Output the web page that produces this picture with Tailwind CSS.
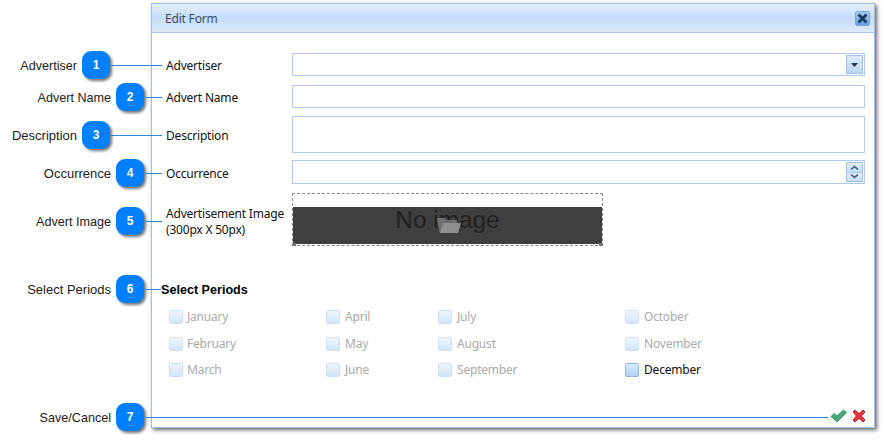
<!DOCTYPE html>
<html>
<head>
<meta charset="utf-8">
<script src="https://cdn.jsdelivr.net/npm/@tailwindcss/browser@4"></script>
</head>
<body class="bg-white">
<div class="relative w-[883px] h-[442px] overflow-hidden bg-white font-['Liberation_Sans',sans-serif]">

  <!-- dialog -->
  <div class="absolute left-[151px] top-[3px] w-[724px] h-[425px] flex flex-col bg-white border border-[#9dbfe8] shadow-[2px_2px_4px_rgba(0,0,0,0.6)] font-['Noto_Sans',sans-serif] text-[12px] tracking-[-0.2px] text-[#111]">
    <div class="h-[29px] shrink-0 flex items-center justify-between pl-[13px] pr-[4px] border-b border-[#a9c7ee] bg-gradient-to-b from-[#e4f0fe] via-[#c5dcf8] to-[#dcebfd]">
      <span class="text-[#3c4a66] pt-[2px]">Edit Form</span>
      <div class="w-[15px] h-[15px] flex items-center justify-center rounded-[2px] border border-[#7fa6d8] bg-gradient-to-b from-[#a6caf3] to-[#6ba2e2]">
        <svg width="11" height="11" viewBox="0 0 11 11"><path d="M1.5 1.5 9.5 9.5M9.5 1.5 1.5 9.5" stroke="#12405f" stroke-width="2.8"/></svg>
      </div>
    </div>

    <div class="flex flex-col pl-[14px] pr-[9px] pt-[20px]">
      <!-- Advertiser -->
      <div class="flex items-center h-[23px]">
        <label class="w-[126px] pt-[2px]">Advertiser</label>
        <div class="flex-1 h-full border border-[#b0cbee] flex justify-end items-center pr-[1px]">
          <div class="w-[17px] h-[19px] border border-[#a3c2ea] bg-gradient-to-b from-[#dcebfc] to-[#bcd6f5] flex items-center justify-center">
            <svg width="7" height="4" viewBox="0 0 7 4"><path d="M0 0H7L3.5 4Z" fill="#26364f"/></svg>
          </div>
        </div>
      </div>
      <!-- Advert name -->
      <div class="flex items-center h-[23px] mt-[9px]">
        <label class="w-[126px] pt-[2px]">Advert Name</label>
        <div class="flex-1 h-full border border-[#b0cbee]"></div>
      </div>
      <!-- Description -->
      <div class="flex items-center h-[37px] mt-[8px]">
        <label class="w-[126px] pt-[2px]">Description</label>
        <div class="flex-1 h-full border border-[#b0cbee]"></div>
      </div>
      <!-- Occurrence -->
      <div class="flex items-center h-[24px] mt-[7px]">
        <label class="w-[126px] pt-[3px]">Occurrence</label>
        <div class="flex-1 h-full border border-[#b0cbee] flex justify-end items-center pr-[1px]">
          <div class="w-[17px] h-[20px] border border-[#a3c2ea] flex flex-col">
            <div class="flex-1 bg-gradient-to-b from-[#e2eefd] to-[#c6dcf7] border-b border-[#a3c2ea] flex items-center justify-center">
              <svg width="9" height="5" viewBox="0 0 9 5"><path d="M1 4.5 4.5 1.5 8 4.5" fill="none" stroke="#4a6690" stroke-width="1.7"/></svg>
            </div>
            <div class="flex-1 bg-gradient-to-b from-[#e2eefd] to-[#c6dcf7] flex items-center justify-center">
              <svg width="9" height="5" viewBox="0 0 9 5"><path d="M1 .5 4.5 3.5 8 .5" fill="none" stroke="#4a6690" stroke-width="1.7"/></svg>
            </div>
          </div>
        </div>
      </div>
      <!-- Image -->
      <div class="flex mt-[9px]">
        <label class="w-[126px] pt-[13px] leading-[16px]">Advertisement Image<br>(300px X 50px)</label>
        <div class="relative w-[311px] h-[53px] border border-dashed border-[#888] flex flex-col justify-end tracking-normal">
          <div class="relative h-[37px] mb-[1px] bg-[#3f3f3f] flex items-center justify-center overflow-hidden pb-[11px]">
            <span class="text-[24.4px] leading-none text-[#1f1f1f] font-['Liberation_Sans',sans-serif]">No image</span>
            <svg class="absolute left-[143px] top-[10px]" width="26" height="17" viewBox="0 0 26 17">
              <path d="M1 1H8L10 3H21V6H25L22 16H4Z" fill="#8f8f8f"/>
              <path d="M1 1H8L10 3H21V6H7L4 16Z" fill="#6f6f6f"/>
            </svg>
          </div>
          <span class="absolute -left-[1px] -bottom-[1px] w-[4px] h-[3px] bg-[#777]"></span>
          <span class="absolute -right-[1px] -bottom-[1px] w-[4px] h-[3px] bg-[#777]"></span>
        </div>
      </div>
      <!-- Periods -->
      <div class="mt-[34px]">
        <h3 class="-ml-[5px] h-[20px] flex items-center font-bold text-[12.6px] tracking-normal text-black font-['Liberation_Sans',sans-serif]">Select Periods</h3>
        <div class="grid grid-cols-[157px_112px_187px_1fr] grid-rows-[repeat(3,26.4px)] grid-flow-col mt-[4px] ml-[3px] text-[#aaa]">
          <div class="flex items-center gap-[4px]"><span class="w-[14px] h-[14px] rounded-[2px] border border-[#cfe0f6] bg-gradient-to-b from-[#eef5fe] to-[#d3e4fa]"></span>January</div>
          <div class="flex items-center gap-[4px]"><span class="w-[14px] h-[14px] rounded-[2px] border border-[#cfe0f6] bg-gradient-to-b from-[#eef5fe] to-[#d3e4fa]"></span>February</div>
          <div class="flex items-center gap-[4px]"><span class="w-[14px] h-[14px] rounded-[2px] border border-[#cfe0f6] bg-gradient-to-b from-[#eef5fe] to-[#d3e4fa]"></span>March</div>
          <div class="flex items-center gap-[5px]"><span class="w-[14px] h-[14px] rounded-[2px] border border-[#cfe0f6] bg-gradient-to-b from-[#eef5fe] to-[#d3e4fa]"></span>April</div>
          <div class="flex items-center gap-[5px]"><span class="w-[14px] h-[14px] rounded-[2px] border border-[#cfe0f6] bg-gradient-to-b from-[#eef5fe] to-[#d3e4fa]"></span>May</div>
          <div class="flex items-center gap-[5px]"><span class="w-[14px] h-[14px] rounded-[2px] border border-[#cfe0f6] bg-gradient-to-b from-[#eef5fe] to-[#d3e4fa]"></span>June</div>
          <div class="flex items-center gap-[5px]"><span class="w-[14px] h-[14px] rounded-[2px] border border-[#cfe0f6] bg-gradient-to-b from-[#eef5fe] to-[#d3e4fa]"></span>July</div>
          <div class="flex items-center gap-[5px]"><span class="w-[14px] h-[14px] rounded-[2px] border border-[#cfe0f6] bg-gradient-to-b from-[#eef5fe] to-[#d3e4fa]"></span>August</div>
          <div class="flex items-center gap-[5px]"><span class="w-[14px] h-[14px] rounded-[2px] border border-[#cfe0f6] bg-gradient-to-b from-[#eef5fe] to-[#d3e4fa]"></span>September</div>
          <div class="flex items-center gap-[5px]"><span class="w-[14px] h-[14px] rounded-[2px] border border-[#cfe0f6] bg-gradient-to-b from-[#eef5fe] to-[#d3e4fa]"></span>October</div>
          <div class="flex items-center gap-[5px]"><span class="w-[14px] h-[14px] rounded-[2px] border border-[#cfe0f6] bg-gradient-to-b from-[#eef5fe] to-[#d3e4fa]"></span>November</div>
          <div class="flex items-center gap-[5px] text-[#111]"><span class="w-[14px] h-[14px] rounded-[2px] border border-[#8fb6e6] bg-gradient-to-b from-[#dceafc] to-[#b4d1f5]"></span>December</div>
        </div>
      </div>
    </div>

    <!-- footer actions -->
    <div class="absolute right-[8px] bottom-[4px] flex items-center gap-[5px]">
      <svg width="17" height="14" viewBox="0 0 17 14"><path d="M1 7.5 4 4.5 7 7 13.5 1 16.5 3.5 7 13Z" fill="#4aa77d" stroke="#3b9a70" stroke-width="1" stroke-linejoin="round"/></svg>
      <svg width="14" height="14" viewBox="0 0 14 14"><path d="M1 3 3 1 7 4.5 11 1 13 3 9.5 7 13 11 11 13 7 9.5 3 13 1 11 4.5 7Z" fill="#e0353a" stroke="#b3262b" stroke-width="1"/></svg>
    </div>
  </div>

  <!-- callouts -->
  <div class="absolute left-0 top-[51px] w-[162px] h-[28px] flex items-center text-[12.6px] text-[#222]">
    <span class="w-[77px] text-right pt-[2px]">Advertiser</span>
    <span class="ml-[5px] w-[28px] h-[28px] shrink-0 rounded-[9px] bg-[#0080ff] text-white font-bold text-[12px] flex items-center justify-center shadow-[2px_2px_3px_rgba(0,0,0,0.55)]">1</span>
    <span class="flex-1 h-[1px] bg-[#2d86d8]"></span>
  </div>
  <div class="absolute left-0 top-[83px] w-[162px] h-[28px] flex items-center text-[12.6px] text-[#222]">
    <span class="w-[111px] text-right pt-[2px]">Advert Name</span>
    <span class="ml-[5px] w-[28px] h-[28px] shrink-0 rounded-[9px] bg-[#0080ff] text-white font-bold text-[12px] flex items-center justify-center shadow-[2px_2px_3px_rgba(0,0,0,0.55)]">2</span>
    <span class="flex-1 h-[1px] bg-[#2d86d8]"></span>
  </div>
  <div class="absolute left-0 top-[121px] w-[162px] h-[28px] flex items-center text-[13px] text-[#222]">
    <span class="w-[77px] text-right pt-[2px]">Description</span>
    <span class="ml-[5px] w-[28px] h-[28px] shrink-0 rounded-[9px] bg-[#0080ff] text-white font-bold text-[12px] flex items-center justify-center shadow-[2px_2px_3px_rgba(0,0,0,0.55)]">3</span>
    <span class="flex-1 h-[1px] bg-[#2d86d8]"></span>
  </div>
  <div class="absolute left-0 top-[159px] w-[162px] h-[28px] flex items-center text-[13px] text-[#222]">
    <span class="w-[111px] text-right pt-[2px]">Occurrence</span>
    <span class="ml-[5px] w-[28px] h-[28px] shrink-0 rounded-[9px] bg-[#0080ff] text-white font-bold text-[12px] flex items-center justify-center shadow-[2px_2px_3px_rgba(0,0,0,0.55)]">4</span>
    <span class="flex-1 h-[1px] bg-[#2d86d8]"></span>
  </div>
  <div class="absolute left-0 top-[207px] w-[162px] h-[28px] flex items-center text-[12.6px] text-[#222]">
    <span class="w-[111px] text-right pt-[2px]">Advert Image</span>
    <span class="ml-[5px] w-[28px] h-[28px] shrink-0 rounded-[9px] bg-[#0080ff] text-white font-bold text-[12px] flex items-center justify-center shadow-[2px_2px_3px_rgba(0,0,0,0.55)]">5</span>
    <span class="flex-1 h-[1px] bg-[#2d86d8]"></span>
  </div>
  <div class="absolute left-0 top-[275px] w-[161px] h-[28px] flex items-center text-[13px] text-[#222]">
    <span class="w-[111px] text-right pt-[2px]">Select Periods</span>
    <span class="ml-[5px] w-[28px] h-[28px] shrink-0 rounded-[9px] bg-[#0080ff] text-white font-bold text-[12px] flex items-center justify-center shadow-[2px_2px_3px_rgba(0,0,0,0.55)]">6</span>
    <span class="flex-1 h-[1px] bg-[#2d86d8]"></span>
  </div>
  <div class="absolute left-0 top-[403px] w-[828px] h-[28px] flex items-center text-[12.6px] text-[#222]">
    <span class="w-[111px] text-right pt-[2px]">Save/Cancel</span>
    <span class="ml-[5px] w-[28px] h-[28px] shrink-0 rounded-[9px] bg-[#0080ff] text-white font-bold text-[12px] flex items-center justify-center shadow-[2px_2px_3px_rgba(0,0,0,0.55)]">7</span>
    <span class="flex-1 h-[1px] bg-[#2d86d8]"></span>
  </div>
</div>
</body>
</html>
